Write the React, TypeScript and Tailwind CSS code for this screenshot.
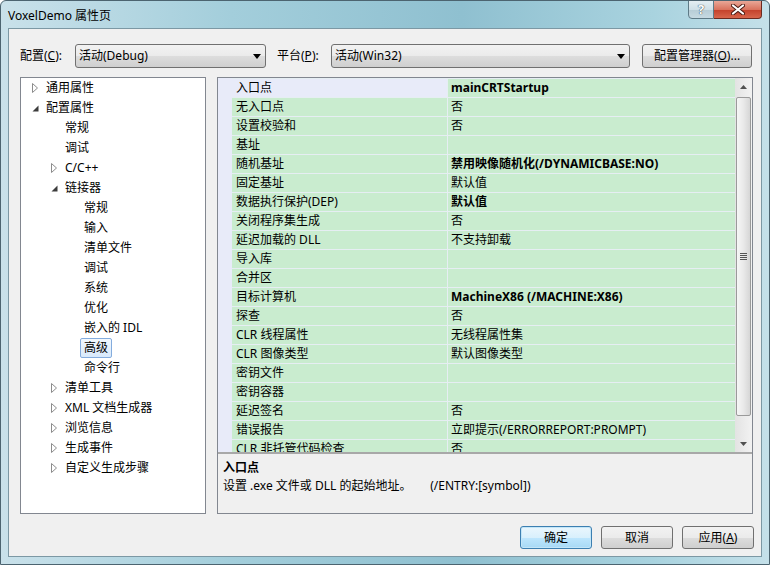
import React from 'react'

const FONT = { fontFamily: '"Noto Sans", "Noto Sans CJK SC", sans-serif' }

type TreeItem = { label: string; level: 0 | 1 | 2; arrow?: 'open' | 'closed'; selected?: boolean }

const TREE: TreeItem[] = [
  { label: '通用属性', level: 0, arrow: 'closed' },
  { label: '配置属性', level: 0, arrow: 'open' },
  { label: '常规', level: 1 },
  { label: '调试', level: 1 },
  { label: 'C/C++', level: 1, arrow: 'closed' },
  { label: '链接器', level: 1, arrow: 'open' },
  { label: '常规', level: 2 },
  { label: '输入', level: 2 },
  { label: '清单文件', level: 2 },
  { label: '调试', level: 2 },
  { label: '系统', level: 2 },
  { label: '优化', level: 2 },
  { label: '嵌入的 IDL', level: 2 },
  { label: '高级', level: 2, selected: true },
  { label: '命令行', level: 2 },
  { label: '清单工具', level: 1, arrow: 'closed' },
  { label: 'XML 文档生成器', level: 1, arrow: 'closed' },
  { label: '浏览信息', level: 1, arrow: 'closed' },
  { label: '生成事件', level: 1, arrow: 'closed' },
  { label: '自定义生成步骤', level: 1, arrow: 'closed' },
]

const INDENT = ['pl-[9px]', 'pl-[28px]', 'pl-[47px]']

const PROPS: { name: string; value: string; bold?: boolean }[] = [
  { name: '入口点', value: 'mainCRTStartup', bold: true },
  { name: '无入口点', value: '否' },
  { name: '设置校验和', value: '否' },
  { name: '基址', value: '' },
  { name: '随机基址', value: '禁用映像随机化(/DYNAMICBASE:NO)', bold: true },
  { name: '固定基址', value: '默认值' },
  { name: '数据执行保护(DEP)', value: '默认值', bold: true },
  { name: '关闭程序集生成', value: '否' },
  { name: '延迟加载的 DLL', value: '不支持卸载' },
  { name: '导入库', value: '' },
  { name: '合并区', value: '' },
  { name: '目标计算机', value: 'MachineX86 (/MACHINE:X86)', bold: true },
  { name: '探查', value: '否' },
  { name: 'CLR 线程属性', value: '无线程属性集' },
  { name: 'CLR 图像类型', value: '默认图像类型' },
  { name: '密钥文件', value: '' },
  { name: '密钥容器', value: '' },
  { name: '延迟签名', value: '否' },
  { name: '错误报告', value: '立即提示(/ERRORREPORT:PROMPT)' },
  { name: 'CLR 非托管代码检查', value: '否' },
]

function Arrow({ kind }: { kind?: 'open' | 'closed' }) {
  if (!kind) return <span className="w-[10px]" />
  return (
    <span className="w-[10px] flex justify-center">
      {kind === 'closed' ? (
        <svg width="6" height="10" viewBox="0 0 6 10">
          <polygon points="0.5,0.5 5.5,5 0.5,9.5" fill="#fff" stroke="#8c8c8c" strokeWidth="1" />
        </svg>
      ) : (
        <svg width="7" height="7" viewBox="0 0 7 7">
          <polygon points="6.5,0.5 6.5,6.5 0.5,6.5" fill="#3c3c3c" />
        </svg>
      )}
    </span>
  )
}

function Combo({ text, width }: { text: string; width: string }) {
  return (
    <div className={`${width} h-[24px] rounded-[3px] border border-[#707070] bg-[linear-gradient(#f2f2f2,#ebebeb_50%,#dddddd_51%,#cfcfcf)] flex items-center pl-[3px] pr-[4px]`}>
      <span className="flex-1 text-[12px] text-black">{text}</span>
      <svg width="8" height="5" viewBox="0 0 8 5">
        <polygon points="0,0 8,0 4,5" fill="#000" />
      </svg>
    </div>
  )
}

function Btn({ children, primary }: { children: React.ReactNode; primary?: boolean }) {
  return (
    <div
      className={`w-[72px] h-[23px] rounded-[3px] border flex items-center justify-center text-[12px] text-black ${
        primary
          ? 'border-[#3c7fb1] bg-[linear-gradient(#eaf6fd,#d9f0fc_50%,#bee6fd_51%,#a7d9f5)] shadow-[inset_0_0_0_1px_#c3e6f8]'
          : 'border-[#707070] bg-[linear-gradient(#f2f2f2,#ebebeb_50%,#dddddd_51%,#cfcfcf)]'
      }`}
    >
      {children}
    </div>
  )
}

export default function App() {
  return (
    <div
      style={FONT}
      className="w-[770px] h-[565px] flex flex-col px-[7px] pb-[7px] border border-[#4c6470] rounded-t-[6px] bg-[linear-gradient(to_right,#c9e1ea,#a3cedb_30%,#8fc0d0_60%,#a9d3df_85%,#c4e0e9)] overflow-hidden"
    >
      {/* Title bar */}
      <div className="h-[27px] flex items-start">
        <span className="mt-[6px] text-[12px] text-black">VoxelDemo 属性页</span>
        <div className="ml-auto flex -mt-px">
          <div className="w-[26px] h-[19px] border border-[#5e7a86] rounded-bl-[4px] bg-[linear-gradient(#e4eef2,#cfe0e7_50%,#b6ccd5_51%,#c6dae2)] flex items-center justify-center">
            <span className="text-[13px] font-bold text-white leading-none [text-shadow:0_0_1px_#33464e,0_0_1px_#33464e]">?</span>
          </div>
          <div className="w-[48px] h-[19px] border border-l-0 border-[#6b2a20] rounded-br-[4px] bg-[linear-gradient(#e9a797,#d9735e_50%,#c3402a_51%,#d7654b)] flex items-center justify-center">
            <svg width="14" height="11" viewBox="0 0 14 11">
              <path d="M2 1.5 L12 9.5 M12 1.5 L2 9.5" stroke="#4a1a12" strokeWidth="4" strokeLinecap="round" />
              <path d="M2 1.5 L12 9.5 M12 1.5 L2 9.5" stroke="#fff" strokeWidth="2.2" strokeLinecap="round" />
            </svg>
          </div>
        </div>
      </div>

      {/* Client area */}
      <div className="flex-1 flex flex-col bg-[#f0f0f0] border border-[#7c98a4]">
        {/* Toolbar */}
        <div className="flex items-center pt-[15px] pl-[11px]">
          <span className="w-[55px] text-[12px] text-black">配置(<u>C</u>):</span>
          <Combo text="活动(Debug)" width="w-[191px]" />
          <span className="ml-[11px] w-[54px] text-[12px] text-black">平台(<u>P</u>):</span>
          <Combo text="活动(Win32)" width="w-[299px]" />
          <div className="ml-[12px] w-[110px] h-[24px] rounded-[3px] border border-[#707070] bg-[linear-gradient(#f2f2f2,#ebebeb_50%,#dddddd_51%,#cfcfcf)] flex items-center justify-center text-[12px] text-black">
            配置管理器(<u>O</u>)...
          </div>
        </div>

        {/* Main */}
        <div className="flex mt-[9px] pl-[11px] h-[437px] gap-[11px]">
          {/* Tree */}
          <div className="w-[186px] bg-white border border-[#828790] pt-0">
            {TREE.map((t, i) => (
              <div key={i} className={`h-[20px] flex items-center ${INDENT[t.level]}`}>
                <Arrow kind={t.arrow} />
                <span
                  className={`ml-[2px] px-[3px] h-[20px] flex items-center rounded-[2px] border text-[12px] text-black whitespace-nowrap ${
                    t.selected
                      ? 'border-[#84acdd] bg-[linear-gradient(#f2f8fe,#d8e9fb)]'
                      : 'border-transparent'
                  }`}
                >
                  {t.label}
                </span>
              </div>
            ))}
          </div>

          {/* Property grid */}
          <div className="w-[536px] border border-[#828790] flex flex-col">
            <div className="h-[374px] flex overflow-hidden">
              <div className="w-[14px] bg-[#e8ebf9]" />
              <div className="flex-1 overflow-hidden pt-[1px] bg-[#e6eef3]">
                {PROPS.map((p, i) => (
                  <div key={i} className="h-[19px] flex border-b border-[#e6eef3] text-[12px] text-black">
                    <div
                      className={`w-[216px] pl-[4px] flex items-center border-r border-[#e6eef3] whitespace-nowrap ${
                        i === 0 ? 'bg-[#e8ebf9]' : 'bg-[#c9eccf]'
                      }`}
                    >
                      {p.name}
                    </div>
                    <div className={`flex-1 pl-[3px] flex items-center bg-[#c9eccf] whitespace-nowrap ${p.bold ? 'font-bold' : ''}`}>
                      {p.value}
                    </div>
                  </div>
                ))}
              </div>
              {/* Scrollbar */}
              <div className="w-[17px] bg-[linear-gradient(to_right,#e3e3e3,#f2f2f2)] flex flex-col items-center">
                <div className="h-[17px] w-full flex items-center justify-center">
                  <svg width="7" height="4" viewBox="0 0 7 4">
                    <polygon points="0,4 7,4 3.5,0" fill="#505050" />
                  </svg>
                </div>
                <div className="mt-[2px] h-[319px] w-[15px] rounded-[2px] border border-[#9a9a9a] bg-[linear-gradient(to_right,#f6f6f6,#e9e9e9_50%,#d6d6d6)] flex items-center justify-center">
                  <div className="flex flex-col gap-[1px]">
                    <div className="w-[7px] h-[1px] bg-[#555]" />
                    <div className="w-[7px] h-[1px] bg-[#555]" />
                    <div className="w-[7px] h-[1px] bg-[#555]" />
                    <div className="w-[7px] h-[1px] bg-[#555]" />
                  </div>
                </div>
                <div className="flex-1" />
                <div className="h-[17px] w-full flex items-center justify-center">
                  <svg width="7" height="4" viewBox="0 0 7 4">
                    <polygon points="0,0 7,0 3.5,4" fill="#505050" />
                  </svg>
                </div>
              </div>
            </div>
            <div className="h-[2px] bg-[#a8a8a8]" />
            <div className="flex-1 bg-[#f0f0f0] pl-[5px] pt-[5px] text-[12px] text-black leading-[18px]">
              <div className="font-bold">入口点</div>
              <div className="whitespace-pre">设置 .exe 文件或 DLL 的起始地址。      (/ENTRY:[symbol])</div>
            </div>
          </div>
        </div>

        {/* Buttons */}
        <div className="mt-[12px] flex justify-end gap-[9px] pr-[7px]">
          <Btn primary>确定</Btn>
          <Btn>取消</Btn>
          <Btn>
            应用(<u>A</u>)
          </Btn>
        </div>
      </div>
    </div>
  )
}
